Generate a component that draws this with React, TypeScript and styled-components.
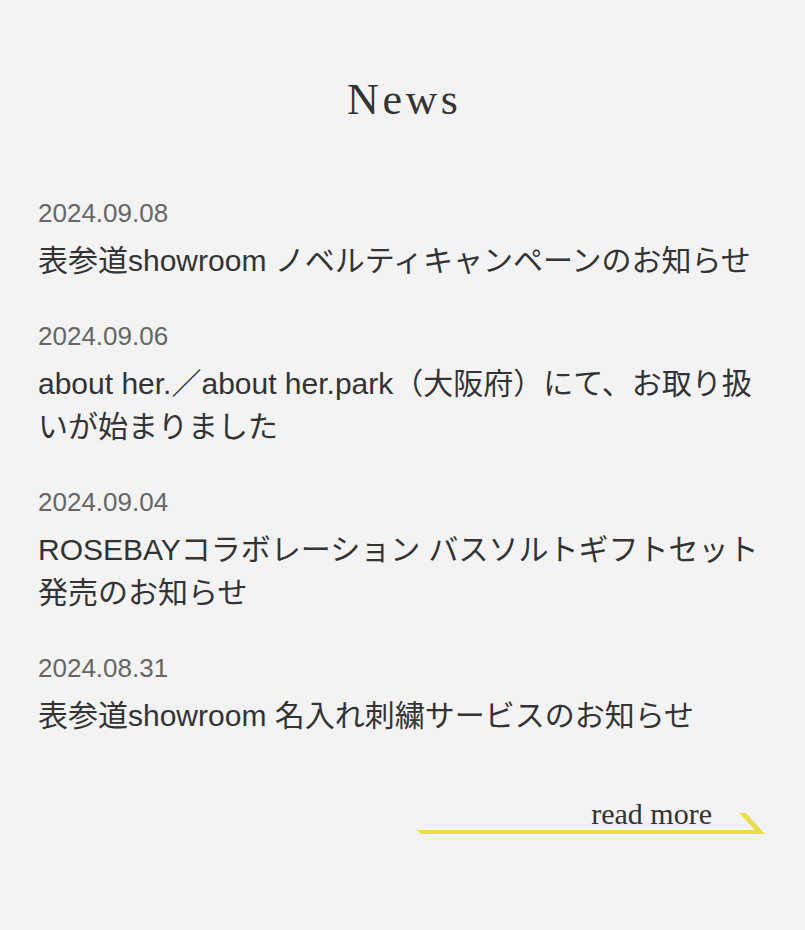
import React from "react";
import styled, { createGlobalStyle } from "styled-components";

const GlobalStyle = createGlobalStyle`
  html, body {
    margin: 0;
    padding: 0;
    background: #f3f3f3;
  }
  * { box-sizing: border-box; }
`;

const Page = styled.section`
  padding: 78px 38px 90px;
  background: #f3f3f3;
`;

const Heading = styled.h2`
  margin: 0;
  text-align: center;
  font-family: "Liberation Serif", "Times New Roman", serif;
  font-weight: 400;
  font-size: 44px;
  line-height: 44px;
  letter-spacing: 0.08em;
  padding-left: 0.08em;
  color: #333;
`;

const NewsList = styled.ul`
  list-style: none;
  margin: 76px 0 0;
  padding: 0;
  display: flex;
  flex-direction: column;
  gap: 39px;
`;

const NewsItem = styled.li`
  display: flex;
  flex-direction: column;
  gap: 11px;
`;

const NewsDate = styled.time`
  display: block;
  font-family: "Liberation Sans", Arial, sans-serif;
  font-size: 26px;
  line-height: 30px;
  color: #666;
`;

const NewsTitle = styled.a`
  display: block;
  font-family: "Liberation Sans", Arial, "Noto Sans CJK JP", sans-serif;
  font-size: 30px;
  line-height: 43px;
  color: #333;
  text-decoration: none;
`;

const MoreRow = styled.div`
  display: flex;
  justify-content: flex-end;
  margin-top: 62px;
  padding-right: 2px;
`;

const MoreLink = styled.a`
  position: relative;
  display: block;
  width: 350px;
  padding: 0 53px 6px 0;
  text-align: right;
  font-family: "Liberation Serif", "Times New Roman", serif;
  font-size: 30px;
  line-height: 30px;
  color: #333;
  text-decoration: none;
`;

const MoreArrow = styled.svg`
  position: absolute;
  left: 0;
  top: 12px;
  width: 350px;
  height: 24px;
  pointer-events: none;
`;

const news = [
  { date: "2024.09.08", title: "表参道showroom ノベルティキャンペーンのお知らせ" },
  { date: "2024.09.06", title: "about her.／about her.park（大阪府）にて、お取り扱いが始まりました" },
  { date: "2024.09.04", title: "ROSEBAYコラボレーション バスソルトギフトセット発売のお知らせ" },
  { date: "2024.08.31", title: "表参道showroom 名入れ刺繍サービスのお知らせ" },
];

export default function App() {
  return (
    <>
      <GlobalStyle />
      <Page>
        <Heading>News</Heading>
        <NewsList>
          {news.map((n) => (
            <NewsItem key={n.date}>
              <NewsDate>{n.date}</NewsDate>
              <NewsTitle href="#">{n.title}</NewsTitle>
            </NewsItem>
          ))}
        </NewsList>
        <MoreRow>
          <MoreLink href="#">
            read more
            <MoreArrow viewBox="0 0 350 24" aria-hidden="true">
              <polygon
                points="2,19 340,19 324,2 331,2 350,23 6,23"
                fill="#ecdc48"
              />
            </MoreArrow>
          </MoreLink>
        </MoreRow>
      </Page>
    </>
  );
}
